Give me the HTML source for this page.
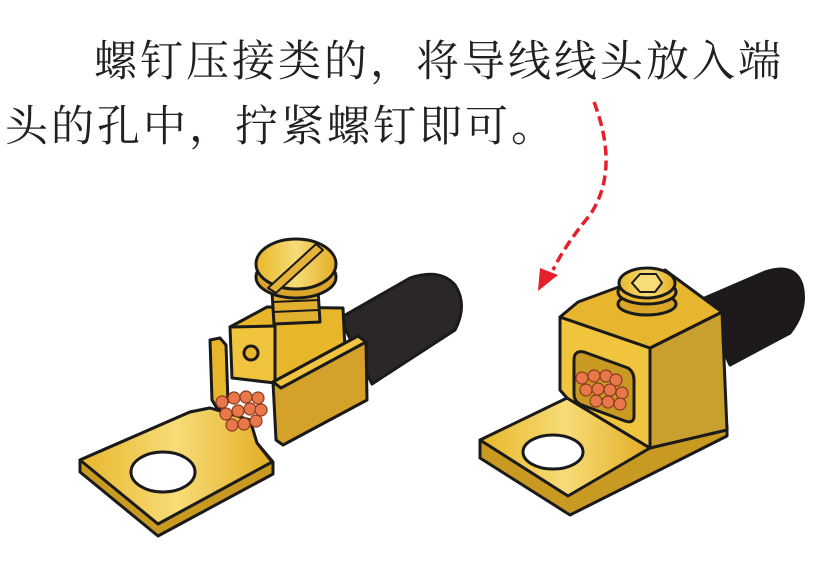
<!DOCTYPE html>
<html><head><meta charset="utf-8"><style>
html,body{margin:0;padding:0;background:#fff;width:831px;height:572px;overflow:hidden;position:relative}
.t{position:absolute;font-family:"Liberation Serif","Noto Serif CJK SC",serif;font-size:43px;color:#231f20;letter-spacing:3px;white-space:nowrap;line-height:1}
svg{position:absolute;left:0;top:0}
</style></head><body>
<div class="t" style="left:94px;top:41px">螺钉压接类的，将导线线头放入端</div>
<div class="t" style="left:5px;top:106px">头的孔中，拧紧螺钉即可。</div>
<svg width="831" height="572" viewBox="0 0 831 572">
<defs>
<linearGradient id="g" x1="0" y1="0" x2="1" y2="0">
<stop offset="0" stop-color="#e8b62a"/><stop offset=".5" stop-color="#f7dc78"/><stop offset="1" stop-color="#e3ad24"/></linearGradient>
</defs>
<g stroke="#1a1a1a" stroke-width="3" stroke-linejoin="round">
<path d="M594 102 Q620 170 590 215 Q565 245 553 270" fill="none" stroke="#e5202c" stroke-width="3.5" stroke-dasharray="10 5"/>
<path d="M538 291 L540 268 L558 275 Z" fill="#e5202c" stroke="none"/>

<!-- LEFT cable -->
<path d="M340 318 L410 278 Q440 268 455 285 Q468 305 455 330 L372 384 Z" fill="#2b2627"/>
<!-- left plate -->
<path d="M80 460 L80 472 L158 536 L273 474 L273 462 L257 443 L250 420 L210 408 L190 412 Z" fill="#c99a22"/>
<path d="M80 460 L190 412 L210 408 L250 420 L257 443 L272 462 L158 524 Z" fill="url(#g)"/>
<ellipse cx="163" cy="472" rx="32" ry="20" fill="#fff"/>
<!-- back flap -->
<path d="M210 340 L220 338 L226 345 L228 402 L218 410 L212 400 Z" fill="#e8b62a"/>
<!-- block top -->
<path d="M230 327 L267 307 L343 308 L345 350 L275 383 Z" fill="#e8b62a"/>
<!-- block front -->
<path d="M230 327 L275 326 L275 383 L232 378 Z" fill="#f0c43d"/>
<circle cx="251" cy="353" r="7" fill="#e8b62a"/>
<!-- copper -->
<g fill="#e8774a" stroke="#8a3a20" stroke-width="1.2">
<circle cx="222" cy="402" r="6"/><circle cx="234" cy="398" r="6"/><circle cx="246" cy="397" r="6"/><circle cx="258" cy="398" r="6"/>
<circle cx="226" cy="414" r="6"/><circle cx="238" cy="411" r="6"/><circle cx="250" cy="409" r="6"/><circle cx="261" cy="410" r="6"/>
<circle cx="232" cy="425" r="6"/><circle cx="244" cy="424" r="6"/><circle cx="256" cy="421" r="6"/>
</g>
<!-- right flap -->
<path d="M273 382 L358 336 L366 342 L367 400 L283 445 L276 440 Z" fill="#d4a22a"/>
<path d="M273 382 L358 336 L366 342 L281 388 Z" fill="#f2c540"/>
<!-- screw -->
<path d="M272 292 L318 290 L320 322 L274 324 Z" fill="#e2b02f"/>
<path d="M273 302 L319 300 M273 312 L319 310" fill="none" stroke-width="2"/>
<ellipse cx="296" cy="277" rx="40" ry="21" fill="#d9a62a"/>
<ellipse cx="296" cy="264" rx="40" ry="25" fill="url(#g)"/>
<path d="M268 288 L316 244 L323 250 L276 293 Z" fill="#e5b23a" stroke-width="2"/>

<!-- RIGHT cable -->
<path d="M700 300 L765 272 Q795 262 802 285 Q808 310 790 333 L730 365 Z" fill="#1e1a1b"/>
<!-- right plate -->
<path d="M480 440 L480 458 L570 515 L727 436 L727 426 L650 448 Z" fill="#c99a22"/>
<path d="M480 440 L567 398 L650 448 L568 496 Z" fill="url(#g)"/>
<ellipse cx="553" cy="452" rx="30" ry="17" fill="#fff"/>
<!-- right box -->
<path d="M650 348 L722 312 L727 430 L650 448 Z" fill="#c8a030"/>
<path d="M560 317 L650 348 L650 448 L567 398 L560 390 Z" fill="#f0c43d"/>
<path d="M560 317 L578 302 L665 270 L722 312 L650 348 Z" fill="#e7b52e"/>
<path d="M574 360 Q574 350 584 352 L628 368 Q634 372 634 380 L634 416 Q634 424 625 421 L582 405 Q574 402 574 394 Z" fill="#c99a22"/>
<g fill="#e8774a" stroke="#8a3a20" stroke-width="1.2">
<circle cx="582" cy="378" r="6"/><circle cx="594" cy="376" r="6"/><circle cx="606" cy="376" r="6"/><circle cx="616" cy="380" r="6"/>
<circle cx="586" cy="390" r="6"/><circle cx="598" cy="389" r="6"/><circle cx="610" cy="390" r="6"/><circle cx="622" cy="393" r="6"/>
<circle cx="596" cy="401" r="6"/><circle cx="608" cy="402" r="6"/><circle cx="620" cy="404" r="6"/>
</g>
<!-- hex screw -->
<ellipse cx="647" cy="304" rx="29" ry="11" fill="#d9a62a"/>
<ellipse cx="647" cy="292" rx="29" ry="12" fill="#e7b52e"/>
<ellipse cx="647" cy="283" rx="28" ry="15" fill="url(#g)"/>
<path d="M632 283 L640 274 L656 274 L662 283 L655 292 L640 292 Z" fill="#f7dc78" stroke-width="2"/>
</g>
</svg>
</body></html>
